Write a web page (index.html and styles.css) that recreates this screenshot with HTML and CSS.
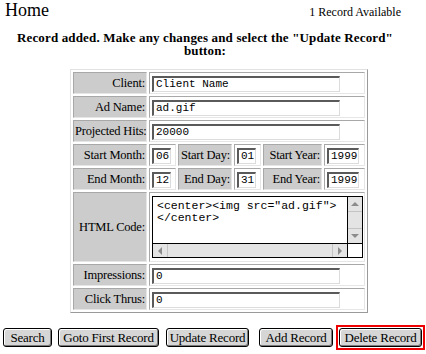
FILE: index.html
```html
<!DOCTYPE html>
<html lang="en">
<head>
  <meta charset="UTF-8">
  <title>Home</title>
  <link rel="stylesheet" href="styles.css">
</head>
<body>
  <div class="top">
    <h1>Home</h1>
    <span class="count">1 Record Available</span>
  </div>

  <p class="notice">Record added. Make any changes and select the "Update Record"<br>button:</p>

  <form class="record">
    <table class="fields">
      <colgroup>
        <col class="w-lbl">
        <col class="w-num">
        <col class="w-day">
        <col class="w-num">
        <col class="w-year">
        <col class="w-yr">
      </colgroup>
      <tr>
        <td class="lbl">Client:</td>
        <td colspan="5"><input class="wide" type="text" value="Client Name"></td>
      </tr>
      <tr>
        <td class="lbl">Ad Name:</td>
        <td colspan="5"><input class="wide" type="text" value="ad.gif"></td>
      </tr>
      <tr>
        <td class="lbl">Projected Hits:</td>
        <td colspan="5"><input class="wide" type="text" value="20000"></td>
      </tr>
      <tr>
        <td class="lbl">Start Month:</td>
        <td><input class="two" type="text" value="06"></td>
        <td class="lbl">Start Day:</td>
        <td><input class="two" type="text" value="01"></td>
        <td class="lbl">Start Year:</td>
        <td><input class="four" type="text" value="1999"></td>
      </tr>
      <tr>
        <td class="lbl">End Month:</td>
        <td><input class="two" type="text" value="12"></td>
        <td class="lbl">End Day:</td>
        <td><input class="two" type="text" value="31"></td>
        <td class="lbl">End Year:</td>
        <td><input class="four" type="text" value="1999"></td>
      </tr>
      <tr class="tall">
        <td class="lbl">HTML Code:</td>
        <td colspan="5">
          <div class="code">
            <textarea class="code-text">&lt;center&gt;&lt;img src="ad.gif"&gt;
&lt;/center&gt;</textarea>
            <div class="vscroll">
              <span class="arr up"></span>
              <span class="track"></span>
              <span class="arr down"></span>
            </div>
            <div class="hscroll">
              <span class="arr left"></span>
              <span class="track"></span>
              <span class="arr right"></span>
            </div>
            <div class="corner"></div>
          </div>
        </td>
      </tr>
      <tr>
        <td class="lbl">Impressions:</td>
        <td colspan="5"><input class="wide" type="text" value="0"></td>
      </tr>
      <tr>
        <td class="lbl">Click Thrus:</td>
        <td colspan="5"><input class="wide" type="text" value="0"></td>
      </tr>
    </table>

    <div class="actions">
      <button type="button" class="b-search">Search</button>
      <button type="button" class="b-first">Goto First Record</button>
      <button type="button" class="b-update">Update Record</button>
      <button type="button" class="b-add">Add Record</button>
      <span class="focus"><button type="button" class="b-delete">Delete Record</button></span>
    </div>
  </form>
</body>
</html>
```

FILE: styles.css
```css
body {
  margin: 0;
  background: #ffffff;
  color: #000000;
  font-family: "Liberation Serif", "Times New Roman", serif;
  font-size: 13px;
}
.top {
  display: flex;
  justify-content: space-between;
  align-items: baseline;
  padding: 0 25px 0 5px;
  height: 20px;
}
h1 {
  margin: 0;
  font-size: 18px;
  font-weight: normal;
  line-height: 21px;
}
.count {
  font-size: 12px;
}
.notice {
  margin: 12px 0 0 0;
  padding-right: 16px;
  text-align: center;
  font-weight: bold;
  font-size: 13px;
  letter-spacing: 0.15px;
  line-height: 12.5px;
}
.fields {
  table-layout: fixed;
  width: 298px;
  margin: 12px 0 0 70px;
  border: 1px solid;
  border-color: #e2e2e2 #9a9a9a #9a9a9a #e2e2e2;
  border-spacing: 2px;
}
.w-lbl {
  width: 74px;
}
.w-num {
  width: 27px;
}
.w-day {
  width: 54px;
}
.w-year {
  width: 59px;
}
.w-yr {
  width: 41px;
}
.fields td {
  border: 1px solid;
  border-color: #a8a8a8 #e6e6e6 #e6e6e6 #a8a8a8;
  padding: 0 1px;
  height: 20px;
  white-space: nowrap;
  overflow: hidden;
}
.fields td.lbl {
  background: #cccccc;
  text-align: right;
  font-size: 12.5px;
  letter-spacing: -0.2px;
}
.fields tr.tall td {
  height: 68px;
}
input {
  box-sizing: border-box;
  height: 16px;
  margin: 0 0 0 1px;
  padding: 0 0 0 2px;
  border: 1px solid;
  border-color: #5a5a5a #dcdcdc #dcdcdc #5a5a5a;
  border-width: 2px 1px 1px 2px;
  font-family: "Liberation Mono", "Courier New", monospace;
  font-size: 11px;
  vertical-align: middle;
  background: #ffffff;
}
input.wide {
  width: 188px;
}
input.two {
  width: 19px;
}
input.four {
  width: 32px;
}
.code {
  display: grid;
  grid-template-columns: 1fr 15px;
  grid-template-rows: 1fr 14px;
  width: 211px;
  height: 62px;
  margin-left: 1px;
  box-sizing: border-box;
  border: 1px solid #000000;
  background: #ffffff;
}
.code-text {
  min-width: 0;
  border: none;
  resize: none;
  overflow: hidden;
  padding: 3px 0 0 4px;
  margin: 0;
  font-family: "Liberation Mono", "Courier New", monospace;
  font-size: 11.5px;
  line-height: 12px;
  color: #000000;
  background: #ffffff;
  outline: none;
}
.vscroll {
  display: flex;
  flex-direction: column;
  border-left: 1px solid #000000;
  background: #e4e4e4;
}
.hscroll {
  display: flex;
  border-top: 1px solid #000000;
  background: #e4e4e4;
}
.corner {
  border-left: 1px solid #000000;
  border-top: 1px solid #000000;
  background: #ffffff;
}
.track {
  flex: 1;
}
.arr {
  position: relative;
  flex: none;
  background: #e4e4e4;
}
.vscroll .arr {
  height: 14px;
}
.vscroll .up {
  border-bottom: 1px solid #c4c4c4;
}
.vscroll .down {
  border-top: 1px solid #c4c4c4;
}
.hscroll .arr {
  width: 14px;
}
.hscroll .left {
  border-right: 1px solid #c4c4c4;
}
.hscroll .right {
  border-left: 1px solid #c4c4c4;
}
.arr::after {
  content: "";
  position: absolute;
  left: 50%;
  top: 50%;
  width: 0;
  height: 0;
  border: 4px solid transparent;
}
.up::after {
  border-bottom-color: #8c8c8c;
  transform: translate(-50%, -75%);
}
.down::after {
  border-top-color: #8c8c8c;
  transform: translate(-50%, -25%);
}
.left::after {
  border-right-color: #8c8c8c;
  transform: translate(-75%, -50%);
}
.right::after {
  border-left-color: #8c8c8c;
  transform: translate(-25%, -50%);
}
.actions {
  display: flex;
  align-items: center;
  margin: 12px 0 0 3px;
  white-space: nowrap;
}
button {
  flex: none;
  height: 19px;
  padding: 0;
  border: 1px solid #000000;
  border-radius: 3px;
  background: #d6d6d6;
  box-shadow: inset 1px 1px 0 #ffffff, inset -1px -1px 0 #7a7a7a;
  font-family: "Liberation Serif", "Times New Roman", serif;
  font-size: 13px;
  letter-spacing: -0.2px;
  color: #000000;
  white-space: nowrap;
}
.b-search {
  width: 49px;
  margin-right: 6px;
}
.b-first {
  width: 101px;
  margin-right: 7px;
}
.b-update {
  width: 83px;
  margin-right: 10px;
}
.b-add {
  width: 74px;
  margin-right: 3px;
}
.b-delete {
  width: 83px;
}
.focus {
  display: inline-flex;
  flex: none;
  border: 2px solid #ee0000;
  padding: 1px;
}
```
